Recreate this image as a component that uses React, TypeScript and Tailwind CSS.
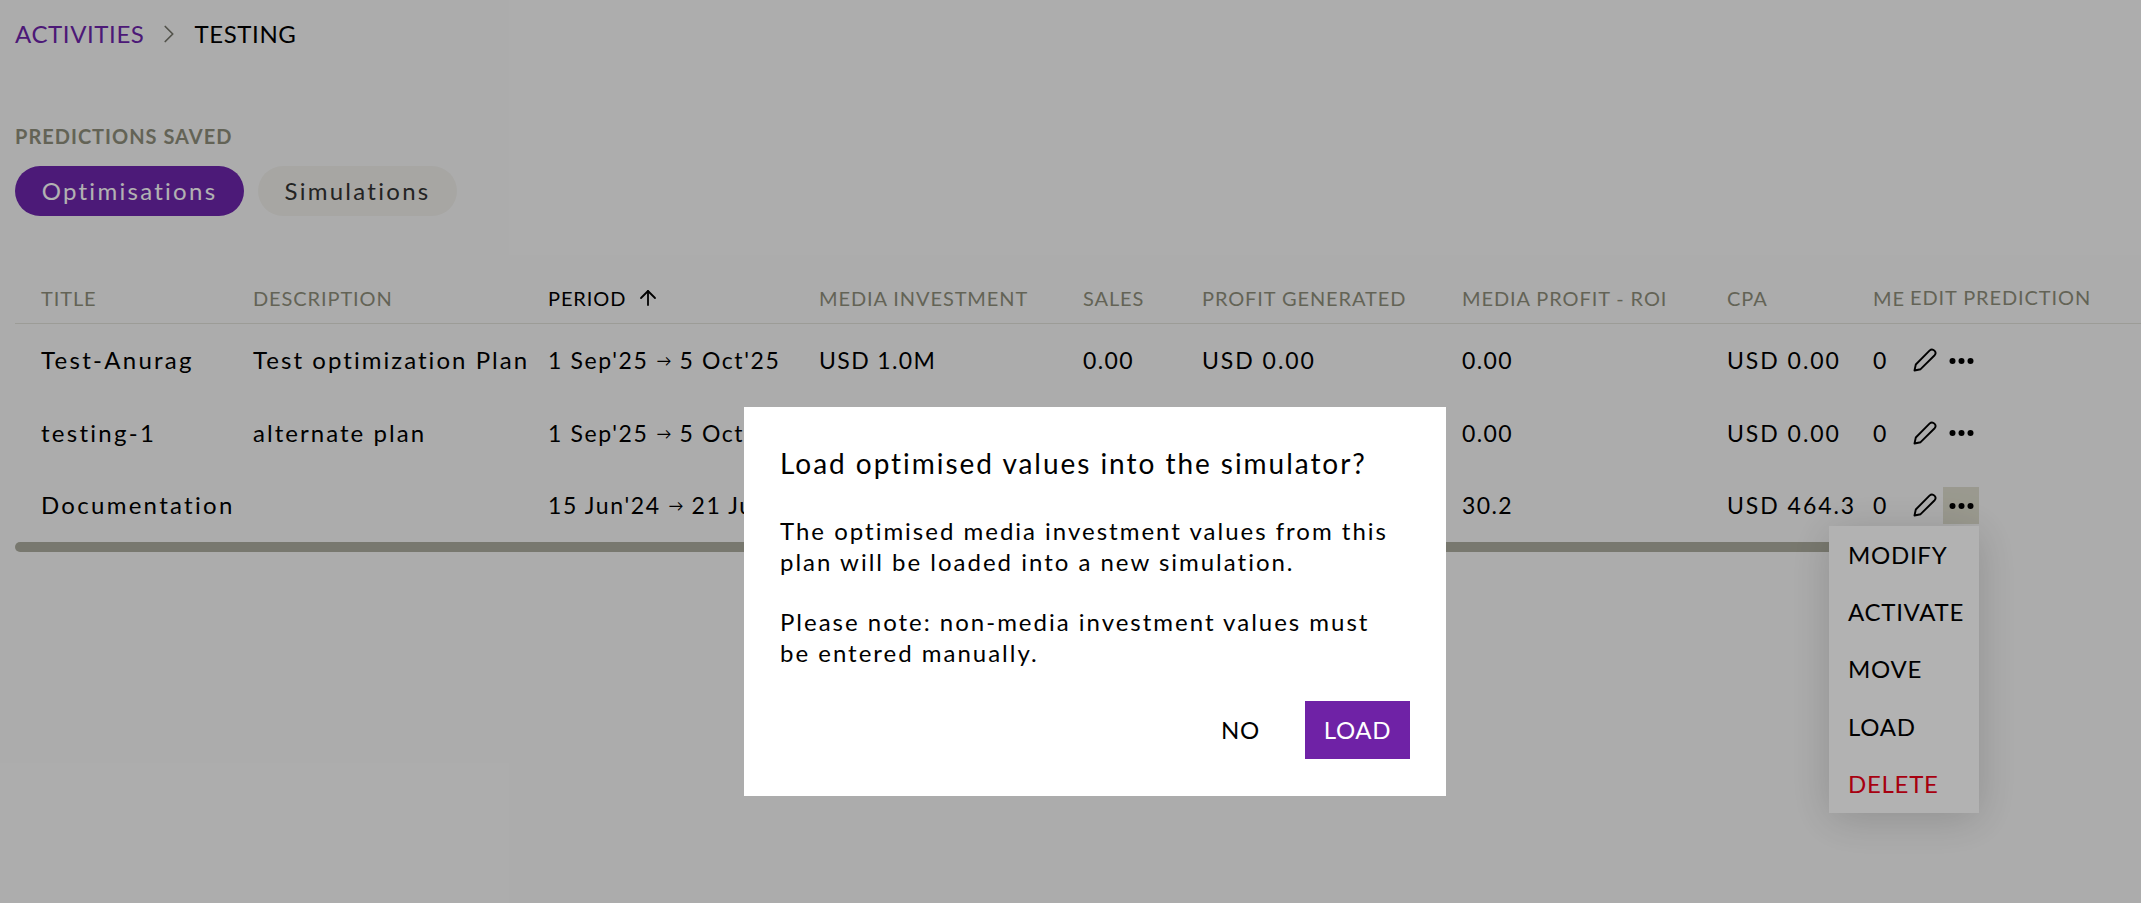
import { ArrowUp, ChevronRight } from 'lucide-react'

const cols = 'grid grid-cols-[238px_295px_271px_264px_119px_260px_265px_146px_37px_1fr]'

const headers = ['TITLE', 'DESCRIPTION', 'PERIOD', 'MEDIA INVESTMENT', 'SALES', 'PROFIT GENERATED', 'MEDIA PROFIT - ROI', 'CPA', 'ME']

const rows = [
  ['Test-Anurag', 'Test optimization Plan', ["1 Sep'25", "5 Oct'25"], 'USD 1.0M', '0.00', 'USD 0.00', '0.00', 'USD 0.00', '0'],
  ['testing-1', 'alternate plan', ["1 Sep'25", "5 Oct'25"], 'USD 1.0M', '0.00', 'USD 0.00', '0.00', 'USD 0.00', '0'],
  ['Documentation', '', ["15 Jun'24", "21 Jun'24"], 'USD 1.0M', '0.00', 'USD 0.00', '30.2', 'USD 464.3', '0'],
]

const menuItems = ['MODIFY', 'ACTIVATE', 'MOVE', 'LOAD']

function PencilIcon() {
  return (
    <svg width="24" height="24" viewBox="0 0 24 24" fill="none" stroke="#000" strokeWidth="1.9" strokeLinejoin="round">
      <path d="M1.5 22.5 L2.8 16.5 L16.5 2.6 C18 1.2 20 1.2 21.4 2.6 C22.8 4 22.8 6 21.4 7.5 L7.6 21.2 Z" />
    </svg>
  )
}

function DotsIcon() {
  return (
    <svg width="25" height="8" viewBox="0 0 25 8" fill="#000">
      <circle cx="3.5" cy="4" r="3" />
      <circle cx="12.5" cy="4" r="3" />
      <circle cx="21.5" cy="4" r="3" />
    </svg>
  )
}

export default function App() {
  return (
    <div className="relative h-[903px] w-[2141px] overflow-hidden bg-[#f7f7f7] pl-[15px] font-['Lato',sans-serif] text-black">
      {/* breadcrumb */}
      <div className="flex h-[68px] items-center text-[24px] tracking-[0.025em]">
        <span className="text-[#6d25ab]">ACTIVITIES</span>
        <ChevronRight className="mx-[10px] h-[30px] w-[30px] text-[#77776c]" strokeWidth={1.4} />
        <span>TESTING</span>
      </div>

      <div className="mt-[56px] text-[20px] font-bold leading-[24px] tracking-[0.05em] text-[#8f8f7c]">PREDICTIONS SAVED</div>

      <div className="mt-[18px] flex gap-[14px]">
        <button className="h-[50px] w-[229px] rounded-[25px] bg-[#6d26ac] text-[24px] tracking-[0.095em] text-white">Optimisations</button>
        <button className="h-[50px] w-[199px] rounded-[25px] bg-[#efeeea] text-[24px] tracking-[0.095em] text-[#333]">Simulations</button>
      </div>

      {/* table */}
      <div className="mt-[56px]">
        <div className={`${cols} h-[52px] items-center border-b border-[#e0e0d8] text-[20px] tracking-[0.045em] text-[#8f8f7c]`}>
          {headers.map((h, i) => (
            <div key={h} className={`whitespace-nowrap ${i === 0 ? 'pl-[26px]' : ''} ${i === 2 ? 'flex items-center text-black' : ''}`}>
              {h}
              {i === 2 && <ArrowUp className="ml-[10px] h-[24px] w-[24px]" strokeWidth={1.8} />}
            </div>
          ))}
          <div className="-mt-[2px] whitespace-nowrap">EDIT PREDICTION</div>
        </div>
        {rows.map((row, r) => (
          <div key={r} className={`${cols} h-[72.5px] items-center whitespace-nowrap text-[23px] tracking-[0.06em]`}>
            {row.map((cell, i) => {
              if (Array.isArray(cell)) {
                return (
                  <div key={i} className="flex items-center gap-[8px] tracking-[0.07em]">
                    <span>{cell[0]}</span>
                    <span className="text-[15px] tracking-normal">→</span>
                    <span>{cell[1]}</span>
                  </div>
                )
              }
              return (
                <div
                  key={i}
                  className={
                    i === 0
                      ? 'pl-[26px] text-[24px] tracking-[0.095em]'
                      : i === 1
                        ? 'text-[24px] tracking-[0.085em]'
                        : i === 5 || i === 7
                          ? 'tracking-[0.085em]'
                          : ''
                  }
                >
                  {cell}
                </div>
              )
            })}
            <div className="flex items-center">
              <div className="ml-[3px] mr-[6px] flex"><PencilIcon /></div>
              <div className={`flex h-[37px] w-[36px] items-center justify-center pt-[1px] ${r === 2 ? 'bg-[#dddccd]' : ''}`}>
                <DotsIcon />
              </div>
            </div>
          </div>
        ))}
        <div className="h-[10px] w-[1900px] rounded-[5px] bg-[#adad9f]" />
      </div>

      {/* row menu */}
      <div className="absolute left-[1829px] top-[526px] w-[150px] bg-white pl-[19px] text-[24px] tracking-[0.03em] shadow-[0_6px_40px_rgba(0,0,0,0.16)]">
        {menuItems.map((m) => (
          <div key={m} className="flex h-[57.4px] items-center">{m}</div>
        ))}
        <div className="flex h-[57.4px] items-center text-[#ef0017]">DELETE</div>
      </div>

      {/* dialog */}
      <div className="absolute inset-0 bg-black/30 pl-[744px] pt-[407px]">
        <div className="h-[389px] w-[702px] bg-white px-[36px] pt-[36px]">
          <h2 className="text-[28px] leading-[40px] tracking-[0.07em]">Load optimised values into the simulator?</h2>
          <p className="mt-[32px] text-[24px] leading-[31px] tracking-[0.083em]">
            The optimised media investment values from this<br />plan will be loaded into a new simulation.
          </p>
          <p className="mt-[29px] text-[24px] leading-[31px] tracking-[0.083em]">
            Please note: non-media investment values must<br />be entered manually.
          </p>
          <div className="mt-[33px] flex items-center justify-end">
            <button className="mr-[45px] text-[24px] tracking-[0.03em]">NO</button>
            <button className="h-[58px] w-[105px] bg-[#6f22a6] text-[24px] tracking-[0.03em] text-white">LOAD</button>
          </div>
        </div>
      </div>
    </div>
  )
}
